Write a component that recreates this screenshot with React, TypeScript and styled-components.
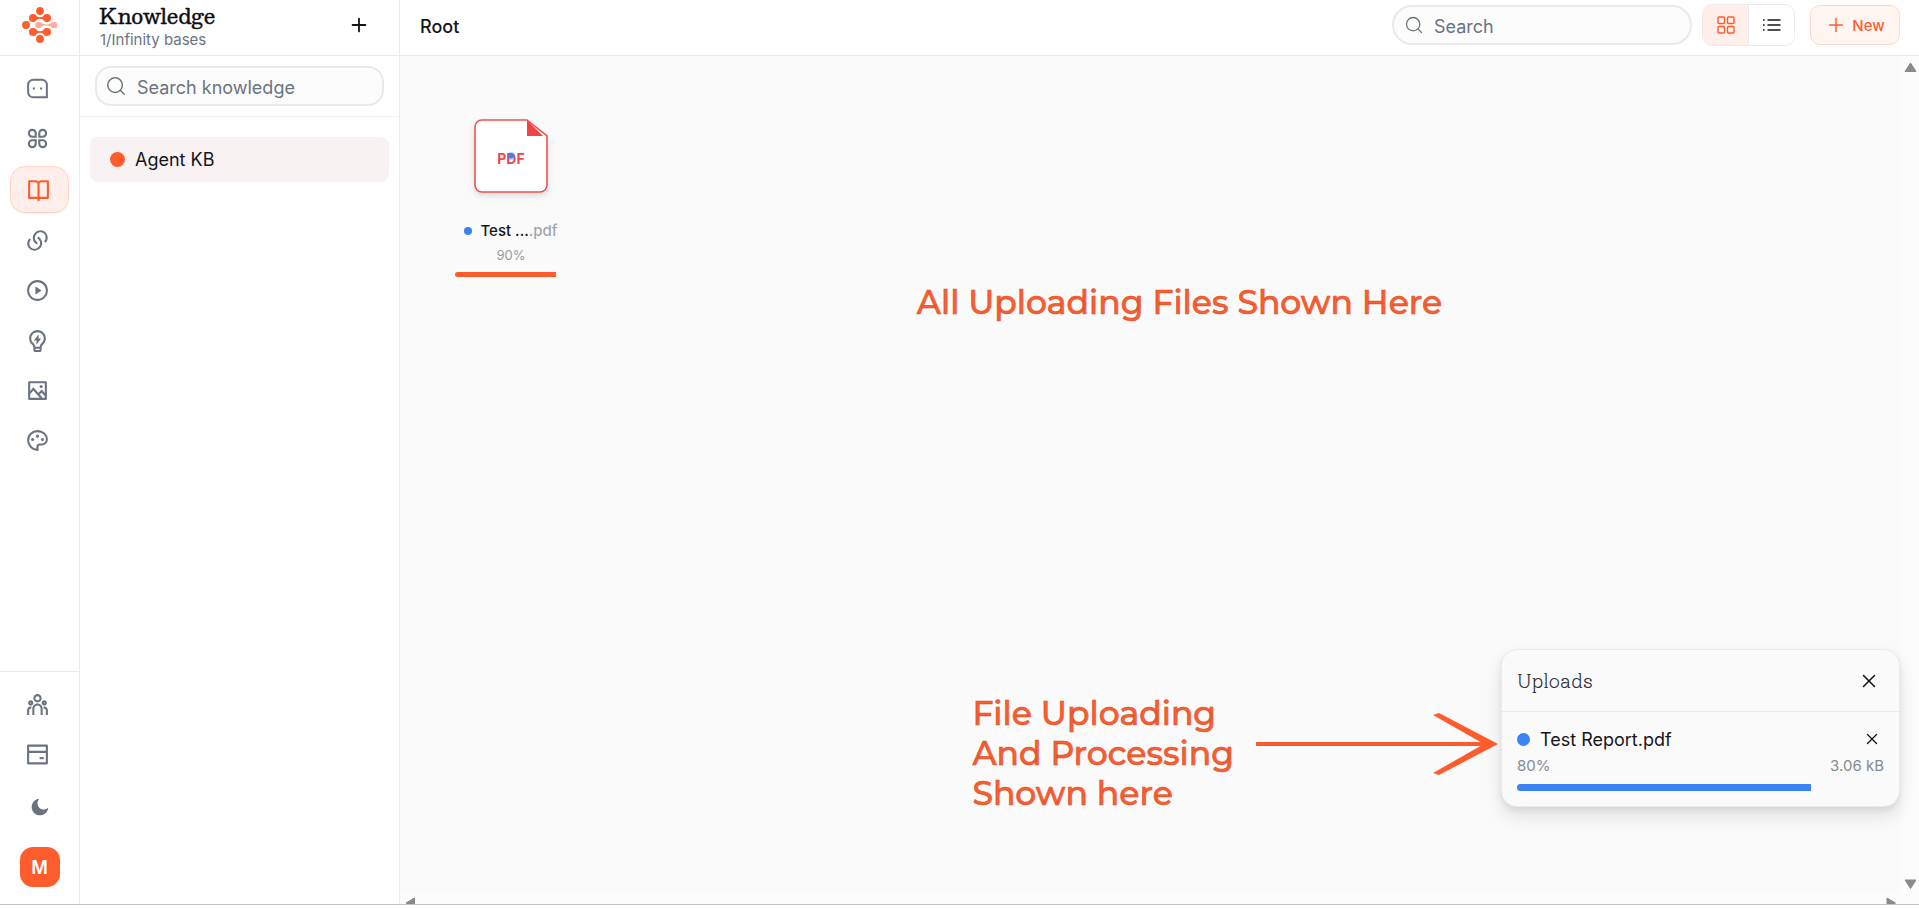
import React from "react";
import styled, { createGlobalStyle, css } from "styled-components";
import {
  RiBookOpenLine,
  RiLightbulbFlashLine,
  RiLinksLine,
  RiMoonFill,
  RiPlayCircleLine,
  RiTeamLine,
} from "react-icons/ri";
import { Plus, Search, X } from "lucide-react";

const accent = "#ff5c2e";
const blue = "#3b82f6";
const line = "#e9eaec";
const ink = "#14161c";
const muted = "#6b7280";

const GlobalStyle = createGlobalStyle`
  *, *::before, *::after { box-sizing: border-box; }
  body {
    margin: 0;
    background: #fff;
    color: ${ink};
    font-family: Inter, "Liberation Sans", sans-serif;
    overflow: hidden;
  }
  button, input { font: inherit; color: inherit; }
  button { cursor: pointer; padding: 0; border: 0; background: none; }
  h1, h2, p, ul { margin: 0; padding: 0; }
  ul { list-style: none; }
`;

const Page = styled.div`
  height: 100vh;
  padding-bottom: 3px;
`;

const Shell = styled.div`
  display: grid;
  grid-template-columns: 80px 320px minmax(0, 1fr);
  height: 100%;
  border-bottom: 1px solid #c4c4c6;
`;

const Rail = styled.nav`
  display: flex;
  flex-direction: column;
  border-right: 1px solid ${line};
`;

const LogoLink = styled.a`
  display: flex;
  align-items: center;
  justify-content: center;
  height: 56px;
  padding-bottom: 5px;
  border-bottom: 1px solid ${line};
  svg { display: block; }
`;

const RailGroup = styled.div<{ $footer?: boolean }>`
  display: flex;
  flex-direction: column;
  align-items: center;
  gap: 3px;
  padding-top: 9px;
  ${(p) =>
    p.$footer &&
    css`
      margin-top: auto;
      padding-bottom: 17px;
      border-top: 1px solid ${line};
    `}
`;

const RailButton = styled.button<{ $active?: boolean }>`
  display: flex;
  align-items: center;
  justify-content: center;
  width: 60px;
  height: 47px;
  padding-right: 4px;
  border: 1px solid transparent;
  border-radius: 15px;
  color: ${muted};
  svg { display: block; width: 25px; height: 25px; }
  ${(p) =>
    p.$active &&
    css`
      width: 59px;
      margin: 1px 0;
      color: ${accent};
      padding-right: 2px;
      background: #ffeee9;
      border-color: #ffd3c6;
      box-shadow: 0 1px 2px rgba(0, 0, 0, 0.05);
    `}
`;

const ThemeButton = styled(RailButton)`
  padding-right: 0;
  height: 51px;
  svg { width: 20px; height: 20px; }
`;

const Avatar = styled.button`
  width: 40px;
  height: 40px;
  margin-top: 12px;
  border-radius: 13px;
  background: ${accent};
  color: #fff;
  font-size: 18px;
  font-weight: 600;
`;

const Sidebar = styled.aside`
  display: flex;
  flex-direction: column;
  border-right: 1px solid ${line};
  background: #fefefe;
`;

const SidebarHeader = styled.header`
  display: flex;
  align-items: flex-start;
  justify-content: space-between;
  height: 56px;
  padding: 3px 28px 0 19px;
  border-bottom: 1px solid ${line};
  background: #fff;
`;

const Title = styled.h1`
  font-family: Besley, "DejaVu Serif", serif;
  font-size: 21px;
  font-weight: 400;
  line-height: 26px;
  color: #0b0d12;
  -webkit-text-stroke: 0.4px #0b0d12;
`;

const Subtitle = styled.p`
  padding-left: 1px;
  font-size: 15px;
  line-height: 22px;
  color: ${muted};
`;

const IconButton = styled.button<{ $size: number }>`
  display: flex;
  flex: none;
  align-items: center;
  justify-content: center;
  width: ${(p) => p.$size}px;
  height: ${(p) => p.$size}px;
`;

const AddButton = styled(IconButton)`
  margin-top: 10px;
`;

const SearchRow = styled.div`
  padding: 10px 15px;
  border-bottom: 1px solid #f3f3f4;
`;

const SearchBox = styled.label<{ $pill?: boolean }>`
  display: flex;
  align-items: center;
  gap: 10px;
  width: ${(p) => (p.$pill ? "300px" : "auto")};
  height: 40px;
  padding: 0 ${(p) => (p.$pill ? 10 : 8)}px;
  border: 2px solid #e8e9ed;
  border-radius: ${(p) => (p.$pill ? 20 : 16)}px;
  background: #fcfcfc;
  color: ${muted};
  svg { flex: none; }
`;

const SearchInput = styled.input`
  flex: 1;
  min-width: 0;
  padding: 2px 0 0;
  border: 0;
  outline: 0;
  background: transparent;
  font-size: 18px;
  &::placeholder { color: ${muted}; opacity: 1; }
`;

const BaseList = styled.ul`
  padding: 20px 10px;
`;

const BaseItem = styled.button`
  display: flex;
  align-items: center;
  gap: 10px;
  width: 100%;
  height: 45px;
  padding: 0 20px;
  border-radius: 8px;
  background: #f8f2f2;
  font-size: 18px;
`;

const Dot = styled.span<{ $size: number; $color: string }>`
  flex: none;
  width: ${(p) => p.$size}px;
  height: ${(p) => p.$size}px;
  border-radius: 50%;
  background: ${(p) => p.$color};
`;

const Main = styled.main`
  display: flex;
  flex-direction: column;
  min-width: 0;
  min-height: 0;
`;

const Toolbar = styled.header`
  display: flex;
  align-items: center;
  height: 56px;
  padding: 0 19px 5px 20px;
  border-bottom: 1px solid ${line};
  background: #fff;
`;

const Crumb = styled.h2`
  margin-right: auto;
  padding-top: 2px;
  font-size: 18px;
  font-weight: 500;
`;

const ViewToggle = styled.div`
  display: flex;
  width: 93px;
  height: 42px;
  margin: 0 15px 0 10px;
  border: 1px solid ${line};
  border-radius: 10px;
  overflow: hidden;
`;

const ToggleButton = styled.button<{ $active?: boolean }>`
  display: flex;
  flex: 1;
  align-items: center;
  justify-content: center;
  color: ${(p) => (p.$active ? accent : ink)};
  background: ${(p) => (p.$active ? "#ffeeea" : "#fff")};
  & + & { border-left: 1px solid ${line}; }
`;

const NewButton = styled.button`
  display: flex;
  align-items: center;
  justify-content: center;
  gap: 5px;
  width: 90px;
  height: 40px;
  border: 1px solid #ffd6ca;
  border-radius: 10px;
  background: #fff6f2;
  color: ${accent};
  font-size: 15px;
  font-weight: 500;
`;

const Canvas = styled.section`
  position: relative;
  flex: 1;
  min-height: 0;
  display: grid;
  grid-template-columns: minmax(0, 1fr) 18px;
  grid-template-rows: minmax(0, 1fr) 10px;
  background: #fafafa;
`;

const Files = styled.div`
  padding: 63px 55px;
`;

const VerticalTrack = styled.div`
  display: flex;
  flex-direction: column;
  align-items: center;
  justify-content: space-between;
  padding: 6px 0 4px;
  background: #fcfcfc;
`;

const HorizontalTrack = styled.div`
  display: flex;
  justify-content: space-between;
  grid-column: 1 / -1;
  padding: 3px 20px 0 5px;
  background: #fcfcfc;
  overflow: hidden;
`;

const File = styled.article`
  display: flex;
  flex-direction: column;
  align-items: center;
  width: 112px;
`;

const FileIcon = styled.svg`
  display: block;
  overflow: visible;
  filter: drop-shadow(0 3px 3px rgba(0, 0, 0, 0.12));
`;

const FileName = styled.p`
  display: flex;
  align-items: center;
  margin-top: 28px;
  font-size: 15px;
  font-weight: 500;
  line-height: 20px;
  white-space: nowrap;
`;

const FileLabel = styled.span`
  padding-left: 8px;
`;

const Extension = styled.span`
  font-weight: 500;
  color: #a3a6ad;
`;

const FilePercent = styled.p`
  margin: 5px 0 8px;
  font-size: 13px;
  line-height: 18px;
  color: #979aa2;
`;

const Progress = styled.div<{ $height: number }>`
  width: 100%;
  height: ${(p) => p.$height}px;
  border-radius: ${(p) => p.$height}px;
  overflow: hidden;
`;

const ProgressFill = styled.div<{ $color: string }>`
  height: 100%;
  background: ${(p) => p.$color};
`;

const Note = styled.p`
  font-family: Montserrat, Inter, sans-serif;
  font-size: 33px;
  font-weight: 500;
  line-height: 40px;
  color: ${accent};
  -webkit-text-stroke: 0.6px #d4552f;
  white-space: nowrap;
`;

const TopNote = styled(Note)`
  position: absolute;
  top: 226px;
  left: 0;
  right: 0;
  padding-left: 40px;
  text-align: center;
`;

const Floating = styled.div`
  position: absolute;
  right: 19px;
  bottom: 91px;
  display: flex;
  align-items: flex-start;
`;

const Callout = styled.div`
  display: flex;
  align-items: flex-start;
  gap: 22px;
  padding: 44px 2px 0 0;
  svg { margin-top: 19px; }
`;

const UploadCard = styled.section`
  width: 399px;
  border: 1px solid ${line};
  border-radius: 16px;
  background: #fafafa;
  box-shadow: 0 10px 18px rgba(0, 0, 0, 0.1), 0 3px 6px rgba(0, 0, 0, 0.07);
`;

const UploadHeader = styled.header`
  display: flex;
  align-items: center;
  justify-content: space-between;
  height: 62px;
  padding: 0 18px 0 15px;
  border-bottom: 1px solid ${line};
`;

const UploadTitle = styled.h2`
  font-family: Solway, "DejaVu Serif", serif;
  font-size: 20px;
  font-weight: 300;
  color: #2b2e36;
`;

const UploadBody = styled.div`
  padding: 12px 15px 15px;
`;

const UploadRow = styled.div`
  display: flex;
  align-items: center;
  gap: 10px;
  height: 30px;
  font-size: 18px;
`;

const UploadName = styled.span`
  flex: 1;
`;

const UploadMeta = styled.div`
  display: flex;
  justify-content: space-between;
  margin-bottom: 6px;
  font-size: 15px;
  line-height: 24px;
  color: #858994;
`;

const Logo = () => (
  <svg width="36" height="38" viewBox="0 0 36 38" fill={accent} aria-hidden="true">
    <circle cx="18" cy="5" r="3.900" />
    <circle cx="11" cy="12" r="4" />
    <circle cx="25" cy="12" r="4" />
    <path d="M12 8.200c3 4 9 4 12 0v7.600c-3-4-9-4-12 0z" />
    <circle cx="4" cy="19" r="3.900" />
    <g fill="#ffad96">
      <circle cx="16.500" cy="19" r="3.300" />
      <circle cx="32" cy="19" r="3.300" />
      <path d="M17 15.800c4 3.600 10.500 3.600 14.500 0v6.400c-4-3.600-10.500-3.600-14.500 0z" />
    </g>
    <circle cx="11" cy="26" r="4" />
    <circle cx="25" cy="26" r="4" />
    <path d="M12 22.200c3 4 9 4 12 0v7.600c-3-4-9-4-12 0z" />
    <circle cx="18" cy="33" r="3.900" />
  </svg>
);

const ChatIcon = () => (
  <svg viewBox="0 0 24 24" fill="none" stroke="currentColor" strokeWidth="1.900">
    <path d="M8 3.500h8a5 5 0 0 1 5 5V20.500H8a5 5 0 0 1-5-5v-7a5 5 0 0 1 5-5z" />
    <path d="M7.500 12h2M14.500 12h2" />
  </svg>
);

const PetalsIcon = () => (
  <svg viewBox="0 0 24 24" fill="none" stroke="currentColor" strokeWidth="2">
    <path d="M10.300 10.300H7a3.300 3.300 0 1 1 3.300-3.300zM13.700 10.300V7a3.300 3.300 0 1 1 3.300 3.300zM10.300 13.700V17a3.300 3.300 0 1 1-3.300-3.300zM13.700 13.700H17a3.300 3.300 0 1 1-3.300 3.300z" />
  </svg>
);

const PictureIcon = () => (
  <svg viewBox="0 0 24 24" fill="none" stroke="currentColor" strokeWidth="2">
    <path d="M4 4h16v16H4z" strokeLinejoin="round" />
    <path d="M4 15l4-4.500 8 9M12.500 16l3.500-3.500 4 4.500" />
    <circle cx="15.500" cy="8.200" r="1.500" fill="currentColor" stroke="none" />
  </svg>
);

const PaletteIcon = () => (
  <svg viewBox="0 0 24 24" fill="none" stroke="currentColor" strokeWidth="2">
    <path d="M12 21c-5-.2-9-4.200-9-9.200C3 6.800 7 3 12 3s9 3.400 9 7.800c0 2.900-2.200 5-5 5h-1.800c-1.300 0-2.200.9-2.200 2.100z" strokeLinejoin="round" />
    <g fill="currentColor" stroke="none">
      <circle cx="7.300" cy="11" r="1.500" />
      <circle cx="12" cy="7.800" r="1.500" />
      <circle cx="16.700" cy="11" r="1.500" />
    </g>
  </svg>
);

const CardIcon = () => (
  <svg viewBox="0 0 24 24" fill="none" stroke="currentColor" strokeWidth="2">
    <path d="M3 3.500h18v17H3zM3 9.500h18" strokeLinejoin="round" />
    <path d="M14 15.500h4" />
  </svg>
);

const GridIcon = () => (
  <svg width="18" height="18" viewBox="0 0 18 18" fill="none" stroke="currentColor" strokeWidth="1.400">
    <rect x="1" y="1" width="6.500" height="6.500" rx="1" />
    <rect x="10.500" y="1" width="6.500" height="6.500" rx="1" />
    <rect x="1" y="10.500" width="6.500" height="6.500" rx="1" />
    <rect x="10.500" y="10.500" width="6.500" height="6.500" rx="1" />
  </svg>
);

const ListIcon = () => (
  <svg width="18" height="14" viewBox="0 0 18 14" stroke="currentColor" strokeWidth="1.600">
    <path d="M0 2h1.600M0 7h1.600M0 12h1.600M4.500 2h13M4.500 7h13M4.500 12h13" />
  </svg>
);

const arrowPaths = {
  up: "M6.500 1 12 9.500H1z",
  down: "M6.500 9.500 1 1h11z",
  left: "M1 6 9.500 1v10z",
  right: "M9.500 6 1 1v10z",
};

const ScrollArrow = ({ to }: { to: keyof typeof arrowPaths }) => (
  <svg width="13" height="11" viewBox="0 0 13 11" fill="#8a8a8a" stroke="#8a8a8a" strokeLinejoin="round" aria-hidden="true">
    <path d={arrowPaths[to]} />
  </svg>
);

const PdfIcon = () => (
  <FileIcon width="74" height="74" viewBox="0 0 74 74" role="img" aria-label="PDF file">
    <path d="M8 1h45l20 16v49a7 7 0 0 1-7 7H8a7 7 0 0 1-7-7V8a7 7 0 0 1 7-7z" fill="#fff" stroke="#ef5350" strokeWidth="1.600" />
    <path d="M53 1v16h16z" fill="#ef4444" />
    <text x="37" y="45" textAnchor="middle" fontFamily="Inter, sans-serif" fontSize="14" fontWeight="700" fill="#ef4444">
      PDF
    </text>
    <circle cx="37" cy="37" r="4" fill={blue} opacity="0.350" />
    <circle cx="37" cy="37" r="2.500" fill={blue} />
  </FileIcon>
);

const Arrow = () => (
  <svg width="243" height="64" viewBox="0 0 243 64" fill={accent} aria-hidden="true">
    <path d="M0 30h232v4H0z" />
    <path d="M177 3 183 1 242 32 183 63 177 61 228 32z" />
  </svg>
);

const navItems = [
  { label: "Chat", icon: <ChatIcon /> },
  { label: "Apps", icon: <PetalsIcon /> },
  { label: "Knowledge", icon: <RiBookOpenLine />, active: true },
  { label: "Integrations", icon: <RiLinksLine /> },
  { label: "Media", icon: <RiPlayCircleLine /> },
  { label: "Prompts", icon: <RiLightbulbFlashLine /> },
  { label: "Images", icon: <PictureIcon /> },
  { label: "Branding", icon: <PaletteIcon /> },
];

export default function App() {
  return (
    <Page>
      <GlobalStyle />
      <Shell>
        <Rail aria-label="Main">
          <LogoLink href="#" aria-label="Home">
            <Logo />
          </LogoLink>
          <RailGroup>
            {navItems.map((item) => (
              <RailButton key={item.label} aria-label={item.label} $active={item.active}>
                {item.icon}
              </RailButton>
            ))}
          </RailGroup>
          <RailGroup $footer>
            <RailButton aria-label="Team"><RiTeamLine /></RailButton>
            <RailButton aria-label="Billing"><CardIcon /></RailButton>
            <ThemeButton aria-label="Dark mode"><RiMoonFill /></ThemeButton>
            <Avatar aria-label="Account">M</Avatar>
          </RailGroup>
        </Rail>

        <Sidebar>
          <SidebarHeader>
            <div>
              <Title>Knowledge</Title>
              <Subtitle>1/Infinity bases</Subtitle>
            </div>
            <AddButton $size={24} aria-label="Add knowledge base">
              <Plus size={22} strokeWidth={2} />
            </AddButton>
          </SidebarHeader>
          <SearchRow>
            <SearchBox>
              <Search size={22} strokeWidth={1.6} />
              <SearchInput type="search" placeholder="Search knowledge" aria-label="Search knowledge" />
            </SearchBox>
          </SearchRow>
          <BaseList>
            <li>
              <BaseItem>
                <Dot $size={15} $color={accent} />
                Agent KB
              </BaseItem>
            </li>
          </BaseList>
        </Sidebar>

        <Main>
          <Toolbar>
            <Crumb>Root</Crumb>
            <SearchBox $pill>
              <Search size={20} strokeWidth={1.6} />
              <SearchInput type="search" placeholder="Search" aria-label="Search files" />
            </SearchBox>
            <ViewToggle>
              <ToggleButton $active aria-label="Grid view"><GridIcon /></ToggleButton>
              <ToggleButton aria-label="List view"><ListIcon /></ToggleButton>
            </ViewToggle>
            <NewButton>
              <Plus size={22} strokeWidth={1.6} />
              New
            </NewButton>
          </Toolbar>

          <Canvas>
            <Files>
              <File>
                <PdfIcon />
                <FileName>
                  <Dot $size={8} $color={blue} />
                  <FileLabel>Test ...</FileLabel>
                  <Extension>.pdf</Extension>
                </FileName>
                <FilePercent>90%</FilePercent>
                <Progress $height={5}>
                  <ProgressFill $color={accent} style={{ width: "90%" }} />
                </Progress>
              </File>
            </Files>
            <VerticalTrack>
              <ScrollArrow to="up" />
              <ScrollArrow to="down" />
            </VerticalTrack>
            <HorizontalTrack>
              <ScrollArrow to="left" />
              <ScrollArrow to="right" />
            </HorizontalTrack>

            <TopNote>All Uploading Files Shown Here</TopNote>

            <Floating>
              <Callout>
                <Note>
                  File Uploading
                  <br />
                  And Processing
                  <br />
                  Shown here
                </Note>
                <Arrow />
              </Callout>
              <UploadCard aria-label="Uploads">
                <UploadHeader>
                  <UploadTitle>Uploads</UploadTitle>
                  <IconButton $size={24} aria-label="Close uploads">
                    <X size={22} strokeWidth={1.7} />
                  </IconButton>
                </UploadHeader>
                <UploadBody>
                  <UploadRow>
                    <Dot $size={13} $color={blue} />
                    <UploadName>Test Report.pdf</UploadName>
                    <IconButton $size={24} aria-label="Cancel upload">
                      <X size={18} strokeWidth={1.8} />
                    </IconButton>
                  </UploadRow>
                  <UploadMeta>
                    <span>80%</span>
                    <span>3.06 kB</span>
                  </UploadMeta>
                  <Progress $height={7}>
                    <ProgressFill $color={blue} style={{ width: "80%" }} />
                  </Progress>
                </UploadBody>
              </UploadCard>
            </Floating>
          </Canvas>
        </Main>
      </Shell>
    </Page>
  );
}
